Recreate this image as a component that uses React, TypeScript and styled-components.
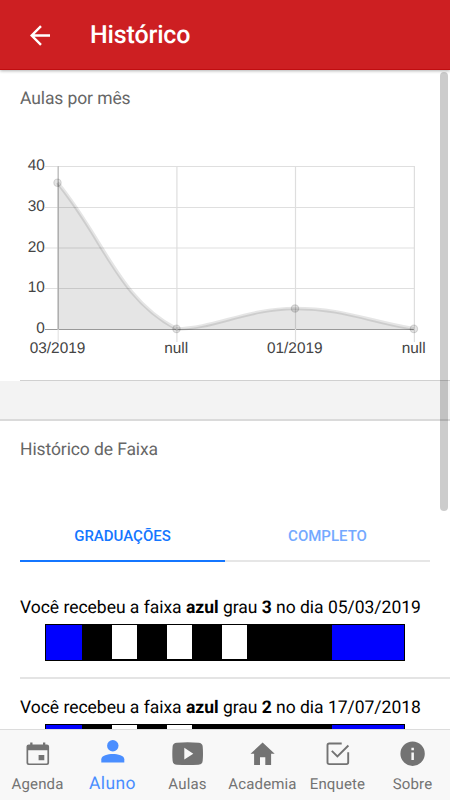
import React from "react";
import styled, { createGlobalStyle } from "styled-components";

const GlobalStyle = createGlobalStyle`
  * { box-sizing: border-box; }
  body { margin: 0; background: #fff; overflow: hidden; }
`;

const Screen = styled.div`
  position: relative;
  display: flex;
  flex-direction: column;
  width: 450px;
  height: 800px;
  overflow: hidden;
  background: #fff;
  color: #000;
  font-family: Roboto, sans-serif;
  text-rendering: geometricPrecision;
`;

const Header = styled.header`
  flex: none;
  display: flex;
  align-items: center;
  gap: 36px;
  height: 70px;
  padding-left: 26px;
  background: #cd1f22;
  border-bottom: 1px solid #c00d10;
  color: #fff;
  z-index: 1;
  box-shadow: 0 1px 3px rgba(0, 0, 0, 0.3);
`;

const BackButton = styled.button`
  display: flex;
  padding: 0;
  border: 0;
  background: none;
  color: inherit;
`;

const Title = styled.h1`
  margin: 0;
  padding-top: 3px;
  font-size: 25px;
  font-weight: 500;
  line-height: 30px;
  letter-spacing: -0.15px;
`;

const Content = styled.main`
  flex: 1;
  min-height: 0;
  overflow: hidden;
`;

const ChartSection = styled.section`
  height: 310px;
  padding-top: 17px;
`;

const SectionTitle = styled.h2`
  margin: 0 0 0 20px;
  font-size: 17.5px;
  font-weight: 400;
  line-height: 24px;
  letter-spacing: -0.1px;
  color: #666;
`;

const Chart = styled.svg`
  display: block;
  margin-top: 39px;
  font-family: "Liberation Sans", sans-serif;
  font-size: 15.4px;
`;

const Gap = styled.div`
  height: 41px;
  background:
    linear-gradient(#d0d0d0, #d0d0d0) 20px 0 / 430px 1px no-repeat,
    linear-gradient(#fff, #fff) 0 0 / 20px 1px no-repeat,
    #f3f3f3;
  border-bottom: 2px solid #dadada;
`;

const BeltSection = styled.section`
  padding-top: 17px;
`;

const Segments = styled.div`
  display: flex;
  margin: 48px 20px 0;
`;

const Segment = styled.button<{ $active?: boolean }>`
  flex: 1;
  height: 52px;
  padding: 1px 0 0;
  border: 0;
  border-bottom: ${(p) => (p.$active ? "2px solid #1476ff" : "2px solid #e6e6e6")};
  background: none;
  color: ${(p) => (p.$active ? "#1476ff" : "#74a9ff")};
  font: 500 15px/20px Roboto, sans-serif;
  letter-spacing: 0;
`;

const List = styled.div`
  padding-top: 17px;
`;

const Item = styled.article`
  height: 100px;
  margin-left: 20px;
  padding-top: 17px;
  border-bottom: 2px solid #e4e4e4;
`;

const Message = styled.p`
  margin: 0;
  white-space: nowrap;
  font-size: 17.5px;
  line-height: 24px;
  letter-spacing: -0.02px;
`;

const Belt = styled.div`
  display: flex;
  width: 360px;
  height: 37px;
  margin: 4px 0 0 25px;
  border: 1px solid #000;
  background: #000;
`;

const Band = styled.span<{ $width: number; $color: string }>`
  width: ${(p) => p.$width}px;
  height: ${(p) => (p.$color === "#fff" ? "34px" : "35px")};
  background: ${(p) => p.$color};
`;

const TabBar = styled.nav`
  flex: none;
  display: flex;
  height: 71px;
  background: #f8f8f8;
  border-top: 1px solid #dcdcdc;
  z-index: 1;
`;

const Tab = styled.a<{ $active?: boolean }>`
  flex: 1 1 0;
  min-width: 0;
  display: flex;
  flex-direction: column;
  align-items: center;
  padding-top: 10px;
  color: ${(p) => (p.$active ? "#4a8eff" : "#737373")};
`;

const TabLabel = styled.span<{ $active?: boolean }>`
  margin-top: 6px;
  white-space: nowrap;
  line-height: 20px;
  font-size: ${(p) => (p.$active ? "17.5px" : "15px")};
  letter-spacing: ${(p) => (p.$active ? "0.4px" : "0.15px")};
`;

const ScrollThumb = styled.div`
  position: absolute;
  top: 72px;
  right: 2px;
  width: 8px;
  height: 439px;
  border-radius: 4px;
  background: rgba(0, 0, 0, 0.2);
  z-index: 2;
`;

const yTicks = [
  { label: "40", y: 16.5 },
  { label: "30", y: 57.5 },
  { label: "20", y: 98 },
  { label: "10", y: 138.5 },
  { label: "0", y: 179.5 },
];

const xTicks = [
  { label: "03/2019", x: 58.2 },
  { label: "null", x: 176.9 },
  { label: "01/2019", x: 295.5 },
  { label: "null", x: 414.4 },
];

const points = [
  [57.5, 32.7],
  [176.5, 178.9],
  [295, 158.5],
  [413.9, 178.9],
];

const curve =
  "M57.5 32.7C105.1 91.2 118.5 148.3 176.5 178.9C213.6 178.9 247.5 158.5 295 158.5C342.5 158.5 366.4 170.8 413.9 178.9";

function LessonsChart() {
  return (
    <Chart width="450" height="214" viewBox="0 0 450 214">
      {yTicks.map((t) => (
        <g key={t.label}>
          <path d={`M45 ${t.y}H415`} stroke={t.label === "0" ? "#999" : "#dfdfdf"} strokeWidth="1.2" />
          <text x="44.8" y={t.y + 3.8} textAnchor="end" fill="#444">
            {t.label}
          </text>
        </g>
      ))}
      {xTicks.map((t, i) => (
        <g key={i}>
          <path d={`M${t.x} 16V192`} stroke={i ? "#dedede" : "#e4e4e4"} strokeWidth="1.2" />
          <text x={t.x - 0.7} y="202.6" textAnchor="middle" fill="#444">
            {t.label}
          </text>
        </g>
      ))}
      <path d="M58.2 16V179.5" stroke="#b9b9b9" strokeWidth="1.2" />
      <path d={`${curve}V179H57.5Z`} fill="rgba(0,0,0,.1)" />
      <path d={curve} fill="none" stroke="rgba(0,0,0,.1)" strokeWidth="3.7" />
      {points.map(([x, y]) => (
        <circle key={x} cx={x} cy={y} r="3.7" fill="rgba(0,0,0,.1)" stroke="rgba(0,0,0,.13)" strokeWidth="1.2" />
      ))}
    </Chart>
  );
}

const bands: [number, string][] = [
  [36, "#00f"],
  [30, "#000"],
  [25, "#fff"],
  [30, "#000"],
  [25, "#fff"],
  [30, "#000"],
  [25, "#fff"],
  [85, "#000"],
  [72, "#00f"],
];

const secondBands: [number, string][] = [
  [36, "#00f"],
  [30, "#000"],
  [25, "#fff"],
  [30, "#000"],
  [25, "#fff"],
  [140, "#000"],
  [72, "#00f"],
];

const graduations = [
  { degree: 3, date: "05/03/2019", bands },
  { degree: 2, date: "17/07/2018", bands: secondBands },
];

const tabs = [
  {
    label: "Agenda",
    icon: (
      <path
        fillRule="evenodd"
        d="M8.4 2.4h2.3v2h10.5v-2h2.3v2h1.6Q27.3 4.4 27.3 6.6V23Q27.3 25 25.2 25H6.8Q4.7 25 4.7 23V6.6Q4.7 4.4 6.9 4.4h1.5ZM6.4 10.2V22.6Q6.4 23.6 7.4 23.6H24.6Q25.6 23.6 25.6 22.6V10.2ZM16.8 15h5.7v5.3h-5.7Z"
      />
    ),
  },
  {
    label: "Aluno",
    active: true,
    icon: (
      <>
        <circle cx="16" cy="5.7" r="5.7" />
        <path d="M4.5 22.4V19.2C4.5 15.5 11 14 16 14s11.5 1.5 11.5 5.2v3.2Z" />
      </>
    ),
  },
  {
    label: "Aulas",
    icon: (
      <path
        fillRule="evenodd"
        d="M5 2.7Q15.8 1.8 26.7 2.7Q30.7 3 30.9 6.6Q31.5 13.7 30.9 20.8Q30.7 24.5 26.7 24.7Q15.8 25.5 5 24.7Q1 24.5 .8 20.8Q.2 13.7 .8 6.6Q1 3 5 2.7ZM12.5 7.8V19.6L21.5 13.7Z"
      />
    ),
  },
  {
    label: "Academia",
    icon: <path d="M15.8 2.6L27.9 13.7H24.3V25H18.5V17.3H13.2V25H7.3V13.7H3.7Z" />,
  },
  {
    label: "Enquete",
    icon: (
      <g fill="none" stroke="currentColor" strokeWidth="1.9">
        <path d="M19.9 3.5H7.5Q5.7 3.5 5.7 5.3V22.3Q5.7 24.1 7.5 24.1H24.6Q26.4 24.1 26.4 22.3V12.3" />
        <path d="M10 10.8L15.6 16.4L26.6 5.5" />
      </g>
    ),
  },
  {
    label: "Sobre",
    icon: (
      <path
        fillRule="evenodd"
        d="M15.8 1.5a12.2 12.2 0 1 0 0 24.4a12.2 12.2 0 1 0 0-24.4ZM14.6 7.7h2.5v2.5h-2.5ZM14.6 12.4h2.5v7.5h-2.5Z"
      />
    ),
  },
];

export default function App() {
  return (
    <Screen>
      <GlobalStyle />
      <Header>
        <BackButton aria-label="Voltar">
          <svg width="28" height="28" viewBox="0 0 28 28" fill="none" stroke="currentColor" strokeWidth="2.4">
            <path d="M24 14.5H5.7M15 5.2L5.7 14.5L15 23.8" />
          </svg>
        </BackButton>
        <Title>Histórico</Title>
      </Header>
      <Content>
        <ChartSection>
          <SectionTitle>Aulas por mês</SectionTitle>
          <LessonsChart />
        </ChartSection>
        <Gap />
        <BeltSection>
          <SectionTitle>Histórico de Faixa</SectionTitle>
          <Segments>
            <Segment $active>GRADUAÇÕES</Segment>
            <Segment>COMPLETO</Segment>
          </Segments>
          <List>
            {graduations.map((g) => (
              <Item key={g.date}>
                <Message>
                  Você recebeu a faixa <b>azul</b> grau <b>{g.degree}</b> no dia {g.date}
                </Message>
                <Belt>
                  {g.bands.map(([w, c], i) => (
                    <Band key={i} $width={w} $color={c} />
                  ))}
                </Belt>
              </Item>
            ))}
          </List>
        </BeltSection>
      </Content>
      <TabBar>
        {tabs.map((t) => (
          <Tab key={t.label} $active={t.active}>
            <svg width="32" height="28" viewBox="0.2 0 32 28" fill="currentColor">
              {t.icon}
            </svg>
            <TabLabel $active={t.active}>{t.label}</TabLabel>
          </Tab>
        ))}
      </TabBar>
      <ScrollThumb />
    </Screen>
  );
}
